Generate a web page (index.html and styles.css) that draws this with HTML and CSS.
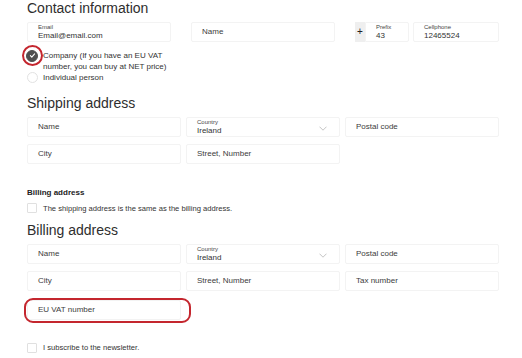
FILE: index.html
```html
<!DOCTYPE html>
<html lang="en">
<head>
  <meta charset="UTF-8" />
  <title>Checkout - Customer details</title>
  <link rel="stylesheet" href="styles.css">
</head>
<body>
  <div class="page">

    <!-- Contact -->
    <h2 class="section-title">Contact information</h2>
    <div class="contact-row">
      <div class="field">
        <span class="field-label">Email</span>
        <span class="field-value">Email@email.com</span>
      </div>
      <div class="field">
        <span class="field-placeholder">Name</span>
      </div>
      <div class="phone">
        <div class="phone-plus">+</div>
        <div class="field prefix">
          <span class="field-label">Prefix</span>
          <span class="field-value">43</span>
        </div>
        <div class="field cellphone">
          <span class="field-label">Cellphone</span>
          <span class="field-value">12465524</span>
        </div>
      </div>
    </div>

    <div class="options">
      <div class="option">
        <span class="radio-wrap marked">
          <span class="radio checked">
            <svg width="7" height="7" viewBox="0 0 10 10"><path d="M2 5.2l2 2 4-4.4" fill="none" stroke="#fff" stroke-width="1.6" stroke-linecap="round" stroke-linejoin="round"/></svg>
          </span>
        </span>
        <span class="option-text">Company (If you have an EU VAT number, you can buy at NET price)</span>
      </div>
      <div class="option">
        <span class="radio-wrap"><span class="radio"></span></span>
        <span class="option-text">Individual person</span>
      </div>
    </div>

    <!-- Shipping -->
    <h2 class="section-title">Shipping address</h2>
    <div class="address-grid">
      <div class="field"><span class="field-placeholder">Name</span></div>
      <div class="field select">
        <span class="field-label">Country</span>
        <span class="field-value">Ireland</span>
        <svg class="chevron" width="8" height="5" viewBox="0 0 8 5"><path d="M0.5 0.7L4 4.2 7.5 0.7" fill="none" stroke="#b5b5b5" stroke-width="0.8"/></svg>
      </div>
      <div class="field"><span class="field-placeholder">Postal code</span></div>
      <div class="field"><span class="field-placeholder">City</span></div>
      <div class="field"><span class="field-placeholder">Street, Number</span></div>
    </div>

    <!-- Billing -->
    <div class="small-title">Billing address</div>
    <div class="check-row">
      <span class="checkbox"></span>
      <span class="check-text">The shipping address is the same as the billing address.</span>
    </div>

    <h2 class="section-title billing-title">Billing address</h2>
    <div class="address-grid">
      <div class="field"><span class="field-placeholder">Name</span></div>
      <div class="field select">
        <span class="field-label">Country</span>
        <span class="field-value">Ireland</span>
        <svg class="chevron" width="8" height="5" viewBox="0 0 8 5"><path d="M0.5 0.7L4 4.2 7.5 0.7" fill="none" stroke="#b5b5b5" stroke-width="0.8"/></svg>
      </div>
      <div class="field"><span class="field-placeholder">Postal code</span></div>
      <div class="field"><span class="field-placeholder">City</span></div>
      <div class="field"><span class="field-placeholder">Street, Number</span></div>
      <div class="field"><span class="field-placeholder">Tax number</span></div>
    </div>

    <div class="address-grid vat-row">
      <div class="field marked-box"><span class="field-placeholder">EU VAT number</span></div>
    </div>

    <div class="check-row newsletter">
      <span class="checkbox"></span>
      <span class="check-text">I subscribe to the newsletter.</span>
    </div>

  </div>
</body>
</html>
```

FILE: styles.css
```css
body {
  margin: 0;
  padding: 0;
  background-color: #ffffff;
  font-family: 'Liberation Sans', Arial, sans-serif;
  color: #333;
}

.page {
  width: 472px;
  padding-left: 27px;
}

.section-title {
  margin: 0 0 6px 0;
  font-size: 14px;
  line-height: 16px;
  font-weight: normal;
  color: #2e2e2e;
}

/* fields */
.field {
  position: relative;
  height: 20px;
  box-sizing: border-box;
  border: 1px solid #f3f3f3;
  border-radius: 2px;
  padding: 0 10px;
  display: flex;
  flex-direction: column;
  justify-content: center;
  background-color: #fff;
}

.field-label {
  font-size: 6px;
  line-height: 7px;
  color: #444;
}

.field-value {
  font-size: 8px;
  line-height: 9px;
  color: #333;
}

.field-placeholder {
  font-size: 8px;
  line-height: 10px;
  color: #3c3c3c;
}

.chevron {
  position: absolute;
  right: 12px;
  top: 8px;
}

/* contact */
.contact-row {
  display: grid;
  grid-template-columns: 144px 144px 144px;
  column-gap: 20px;
}

.phone {
  display: flex;
  gap: 4px;
}

.phone-plus {
  width: 10px;
  height: 20px;
  background-color: #efefef;
  font-size: 10px;
  line-height: 20px;
  text-align: center;
  color: #222;
  margin-right: -4px;
}

.prefix {
  width: 44px;
  border-radius: 0 2px 2px 0;
}

.cellphone {
  flex-grow: 1;
}

/* radios */
.options {
  margin: 8px 0 12px 0;
}

.option {
  display: flex;
  align-items: flex-start;
}

.radio-wrap {
  position: relative;
  width: 16px;
  flex-shrink: 0;
}

.radio {
  width: 11px;
  height: 11px;
  box-sizing: border-box;
  border-radius: 50%;
  border: 1px solid #e2e2e2;
  display: flex;
  justify-content: center;
  align-items: center;
}

.radio.checked {
  width: 12px;
  height: 12px;
  margin-left: -1px;
  margin-top: -0.5px;
  background-color: #4f4f4f;
  border-color: #4f4f4f;
}

.marked::after {
  content: "";
  position: absolute;
  left: -5.5px;
  top: -5.5px;
  width: 17px;
  height: 17px;
  border: 2px solid #c4262e;
  border-radius: 50%;
}

.option-text {
  max-width: 128px;
  font-size: 8px;
  line-height: 11px;
  color: #333;
}

/* address */
.address-grid {
  display: grid;
  grid-template-columns: 154px 154px 154px;
  column-gap: 5px;
  row-gap: 7px;
}

.small-title {
  margin-top: 24px;
  font-size: 8px;
  line-height: 10px;
  font-weight: bold;
  color: #222;
}

.check-row {
  display: flex;
  align-items: center;
  margin-top: 5px;
  height: 10px;
}

.checkbox {
  width: 10px;
  height: 10px;
  box-sizing: border-box;
  border: 1px solid #e0e0e0;
  border-radius: 1px;
  margin-right: 6px;
  flex-shrink: 0;
}

.check-text {
  font-size: 7.6px;
  color: #333;
}

.billing-title {
  margin-top: 9px;
}

.vat-row {
  margin-top: 9px;
}

.marked-box::after {
  content: "";
  position: absolute;
  left: -4px;
  top: -3px;
  right: -11px;
  bottom: -4px;
  border: 2px solid #c4262e;
  border-radius: 9px;
}

.newsletter {
  margin-top: 22px;
  height: 11px;
}
```
